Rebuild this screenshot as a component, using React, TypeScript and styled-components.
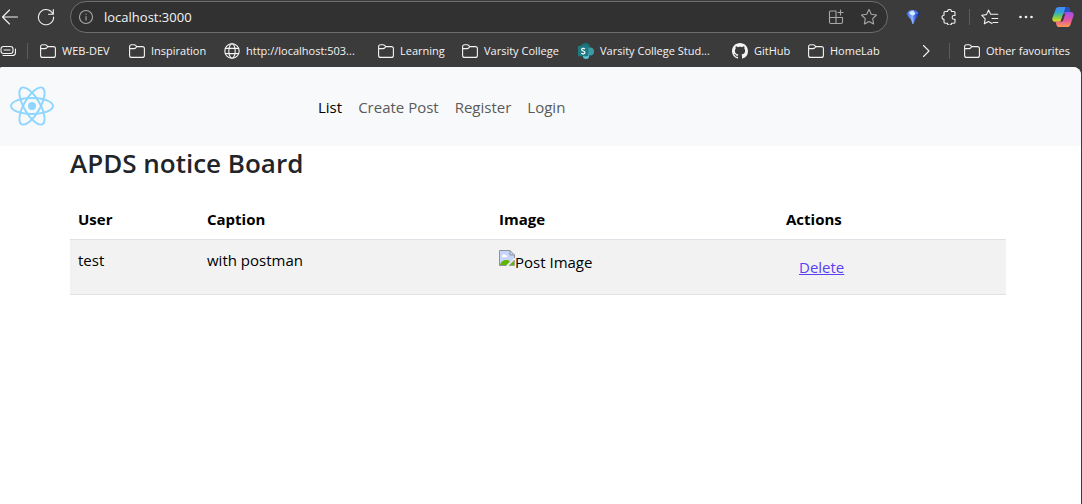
import React from "react";
import styled, { createGlobalStyle } from "styled-components";

const GlobalStyle = createGlobalStyle`
  *, *::before, *::after { box-sizing: border-box; }
  html, body { margin: 0; }
  body {
    background: #3b3b3b;
    color: #212529;
    font: 15px/24px "Open Sans", "Noto Sans", sans-serif;
  }
  svg { display: block; flex: none; }
  button { font: inherit; color: inherit; background: none; border: 0; padding: 0; cursor: pointer; }
`;

const Browser = styled.div`
  display: flex;
  flex-direction: column;
  min-height: 100vh;
`;

const Toolbar = styled.header`
  display: flex;
  align-items: center;
  height: 34px;
  color: #f2f2f2;
`;

const NavButtons = styled.div`
  display: flex;
  gap: 8px;
`;

const ToolButton = styled.button<{ $width: number }>`
  display: flex;
  align-items: center;
  justify-content: center;
  width: ${(p) => p.$width}px;
  height: 32px;
`;

const AddressBar = styled.div`
  display: flex;
  flex: 1;
  align-items: center;
  gap: 9px;
  height: 32px;
  margin: 0 7px 0 6px;
  padding: 0 9px 0 6px;
  border: 1px solid #6e6e6e;
  border-radius: 16px;
  background: #313131;
  color: #a8a8a8;
`;

const AddressInput = styled.input`
  flex: 1;
  min-width: 0;
  padding: 0;
  border: 0;
  outline: 0;
  background: none;
  color: #f4f4f4;
  font: 13px/20px "Open Sans", "Noto Sans", sans-serif;
`;

const AddressActions = styled.div`
  display: flex;
  gap: 16px;
`;

const Divider = styled.span<{ $gap: number }>`
  width: 1px;
  height: 16px;
  margin: 0 ${(p) => p.$gap}px;
  background: #5c5c5c;
`;

const Bookmarks = styled.nav`
  display: flex;
  align-items: center;
  height: 33px;
  padding-right: 12px;
  color: #f4f4f4;
  font-size: 11px;
  line-height: 16px;
  white-space: nowrap;
`;

const Bookmark = styled.a<{ $width?: number }>`
  display: flex;
  align-items: center;
  gap: 6px;
  width: ${(p) => (p.$width ? `${p.$width}px` : "auto")};
  color: inherit;
  text-decoration: none;
`;

const Spacer = styled.span`
  flex: 1;
`;

const Page = styled.div`
  flex: 1;
  margin-right: 1px;
  overflow: hidden;
  border-radius: 2px 8px 0 0;
  background: #fff;
`;

const Navbar = styled.nav`
  display: flex;
  align-items: center;
  height: 79px;
  padding: 0 10px 1px;
  background: #f8f9fa;
`;

const Brand = styled.a`
  width: 300px;
`;

const NavLinks = styled.ul`
  display: flex;
  margin: 0;
  padding: 0;
  list-style: none;
`;

const NavLink = styled.a<{ $active?: boolean }>`
  display: block;
  padding: 9px 8px 7px;
  color: ${(p) => (p.$active ? "#000" : "#595a5b")};
  text-decoration: none;
`;

const Container = styled.main`
  box-sizing: content-box;
  max-width: 936px;
  margin: 0 auto;
  padding: 0 17px 0 12px;
`;

const Title = styled.h3`
  margin: 0 0 18px;
  font-size: 26px;
  font-weight: 600;
  line-height: 35px;
`;

const Table = styled.table`
  width: 100%;
  table-layout: fixed;
  border-collapse: collapse;
  color: #000;
  text-align: left;
`;

const Col = styled.col<{ $width?: number }>`
  width: ${(p) => (p.$width ? `${p.$width}px` : "auto")};
`;

const Head = styled.th`
  padding: 8px;
  border-bottom: 1px solid #dee2e6;
  font-weight: 700;
`;

const Cell = styled.td`
  height: 55px;
  padding: 8px;
  border-bottom: 1px solid #dee2e6;
  background: #f2f2f2;
  vertical-align: top;
`;

const MissingImage = styled.span`
  display: flex;
  align-items: flex-start;
  padding-top: 2px;
`;

const DeleteButton = styled.button`
  padding: 7px 13px;
  color: #5a3ff5;
  text-decoration: underline;
`;

const Line = ({ size = 18, children }: { size?: number; children: React.ReactNode }) => (
  <svg width={size} height={size} viewBox={`0 0 ${size} ${size}`} fill="none" stroke="currentColor" strokeWidth="1.1" strokeLinecap="round" strokeLinejoin="round" aria-hidden="true">
    {children}
  </svg>
);

const STAR = "M9 1.5l2.3 4.8 5.2.7-3.8 3.6.9 5.3L9 13.4l-4.6 2.5.9-5.3L1.5 7l5.2-.7z";

const FolderIcon = () => (
  <Line size={16}>
    <path d="M.6 3.8c0-1.3.7-2 2-2h2.6c.6 0 1 .2 1.4.6l1.2 1.2h5.6c1.3 0 2 .7 2 2v6.8c0 1.3-.7 2-2 2H2.6c-1.3 0-2-.7-2-2zM.6 5.6h4.6c.6 0 1-.2 1.4-.6l1.2-1.4" />
  </Line>
);

const GlobeIcon = () => (
  <Line size={16}>
    <circle cx="8" cy="8" r="7.2" />
    <ellipse cx="8" cy="8" rx="3.2" ry="7.2" />
    <path d="M1.4 5.4h13.2M1.4 10.6h13.2" />
  </Line>
);

const SharePointIcon = () => (
  <svg width="16" height="16" viewBox="0 0 16 16" aria-hidden="true">
    <circle cx="7.5" cy="4.6" r="4.6" fill="#1b7078" />
    <circle cx="12" cy="8.6" r="4" fill="#3b9ca3" />
    <circle cx="8" cy="12.8" r="3.2" fill="#58c4d4" />
    <rect x="0" y="2.8" width="10.4" height="10.4" rx="1" fill="#207a82" />
    <path d="M6.9 5.900C5.700 5 3.500 5.300 3.600 6.700c.1 1.500 3.300 1 3.300 2.700 0 1.600-2.300 1.800-3.600.900" fill="none" stroke="#fff" strokeWidth="1.200" />
  </svg>
);

const GitHubIcon = () => (
  <svg width="16" height="16" viewBox="0 0 16 16" fill="currentColor" aria-hidden="true">
    <path d="M8 0C3.580 0 0 3.580 0 8c0 3.540 2.290 6.530 5.470 7.590.4.070.55-.17.55-.38 0-.19-.01-.82-.01-1.490-2.010.37-2.530-.49-2.690-.94-.09-.23-.48-.94-.82-1.130-.28-.15-.68-.52-.01-.53.63-.01 1.080.58 1.230.82.72 1.210 1.870.87 2.330.66.07-.52.28-.87.51-1.070-1.780-.2-3.640-.89-3.640-3.950 0-.87.31-1.590.82-2.150-.08-.2-.36-1.020.08-2.120 0 0 .67-.21 2.200.82.64-.18 1.320-.27 2-.27s1.360.09 2 .27c1.530-1.040 2.200-.82 2.200-.82.44 1.100.16 1.920.08 2.120.51.56.82 1.270.82 2.150 0 3.070-1.870 3.750-3.650 3.950.29.25.54.73.54 1.480 0 1.070-.01 1.930-.01 2.200 0 .21.15.46.55.38A8.010 8.010 0 0 0 16 8c0-4.420-3.580-8-8-8z" />
  </svg>
);

const GemIcon = () => (
  <svg width="14" height="16" viewBox="0 0 14 16" aria-hidden="true">
    <defs>
      <linearGradient id="gem" x1="0" x2="1">
        <stop offset="0" stopColor="#3a5be0" />
        <stop offset="0.45" stopColor="#8fb6ff" />
        <stop offset="0.65" stopColor="#3e67ec" />
        <stop offset="1" stopColor="#16247c" />
      </linearGradient>
    </defs>
    <path d="M.5 4.500C1.500 2 4 1 7 1s5.500 1 6.500 3.500c.2 1.500-3 4-4.400 6.500L7.500 15h-1l-1.400-4C3.800 8.500.3 6 .5 4.500z" fill="url(#gem)" />
    <path d="M3.500 3.200C4.500 2.200 6 2 8 2.200L9.500 5 7 6.500 3.500 5z" fill="#d6eeff" />
    <path d="M8.500 2c2 .2 3.300 1 3.900 2.600L9.800 5.200z" fill="#4b82f4" />
  </svg>
);

const CopilotIcon = () => (
  <svg width="22" height="22" viewBox="0 0 22 22" aria-hidden="true">
    <defs>
      <linearGradient id="cpLeft" x1="0" y1="0" x2="0" y2="1">
        <stop offset="0" stopColor="#4f86f7" />
        <stop offset="0.35" stopColor="#2aa9d8" />
        <stop offset="0.65" stopColor="#6fcb58" />
        <stop offset="1" stopColor="#f5d821" />
      </linearGradient>
      <linearGradient id="cpRight" x1="0" y1="0" x2="0" y2="1">
        <stop offset="0" stopColor="#9a4ff0" />
        <stop offset="0.5" stopColor="#e052a8" />
        <stop offset="1" stopColor="#ff9a52" />
      </linearGradient>
    </defs>
    <path d="M7 1h8c1.500 0 2.300 1 2.700 2.300L18.200 6H14c-1.500 0-2.300.7-2.800 2.200L9.600 13.500c-.5 1.600-1.400 2.300-3 2.300H3C.8 15.800 0 14 .4 12L3.600 3.400C4.200 1.800 5.300 1 7 1z" fill="url(#cpLeft)" />
    <path d="M13.500 1H15c1.500 0 2.300 1 2.700 2.300l.5 2.700H14c-1.200 0-2 .5-2.500 1.500z" fill="#2350c4" />
    <path d="M15 21H7.200c-1.500 0-2.400-.9-2.800-2.300l-.8-2.900h3c1.600 0 2.500-.7 3-2.300l1.600-5.300C11.700 6.700 12.500 6 14 6h4.800c2.400 0 3.200 1.600 2.700 3.800l-3 8.600c-.6 1.800-1.800 2.600-3.500 2.600z" fill="url(#cpRight)" />
    <path d="M11 8.500l2.500-1.500-2.500 8-2.500 1z" fill="#3b3b3b" />
  </svg>
);

const ReactLogo = () => (
  <svg width="44" height="40" viewBox="-22 -20 44 40" fill="none" stroke="#8ed6ff" strokeWidth="1.900" aria-hidden="true">
    <circle r="4" fill="#8ed6ff" stroke="none" />
    <ellipse rx="21" ry="8" />
    <ellipse rx="21" ry="8" transform="rotate(60)" />
    <ellipse rx="21" ry="8" transform="rotate(120)" />
  </svg>
);

const BrokenImageIcon = () => (
  <svg width="16" height="16" viewBox="0 0 16 16" aria-hidden="true">
    <path d="M.5.5h10.500l4.500 4.500v3L7.500 15.500h-7z" fill="#c6d5fb" />
    <path d="M3 6.500c0-2 2.500-3 3.500-1.200 1.500-.3 2.200 1.200 1.200 2H3z" fill="#fff" />
    <path d="M1 15c.5-4 6-7 10-3.500L7.500 15z" fill="#62b600" />
    <path d="M7.500 15.500h-7V.5h10.500l4.500 4.500v3M11 .5V5h4.500" fill="none" stroke="#8f9399" />
    <path d="M15.500 10v5.500H10z" fill="#62b600" stroke="#8f9399" strokeWidth=".6" />
  </svg>
);

const bookmarks = [
  { label: "WEB-DEV", icon: <FolderIcon />, width: 89 },
  { label: "Inspiration", icon: <FolderIcon />, width: 95 },
  { label: "http://localhost:503...", icon: <GlobeIcon />, width: 154 },
  { label: "Learning", icon: <FolderIcon />, width: 84 },
  { label: "Varsity College", icon: <FolderIcon />, width: 116 },
  { label: "Varsity College Stud...", icon: <SharePointIcon />, width: 154 },
  { label: "GitHub", icon: <GitHubIcon />, width: 76 },
  { label: "HomeLab", icon: <FolderIcon />, width: 74 },
];

const posts = [{ user: "test", caption: "with postman", alt: "Post Image" }];

export default function App() {
  return (
    <Browser>
      <GlobalStyle />
      <Toolbar>
        <NavButtons>
          <ToolButton $width={20} aria-label="Back">
            <Line><path d="M16.500 9H1.500M8.500 2L1.500 9l7 7" /></Line>
          </ToolButton>
          <ToolButton $width={36} aria-label="Refresh">
            <Line><path d="M16 6.200A7.600 7.600 0 1 0 16.600 9M16.300 1.500v4.800h-4.800" /></Line>
          </ToolButton>
        </NavButtons>
        <AddressBar>
          <ToolButton $width={18} aria-label="Site information">
            <Line size={16}><circle cx="8" cy="8" r="6.500" /><path d="M8 7.500v3.500M8 5v.2" /></Line>
          </ToolButton>
          <AddressInput aria-label="Address" defaultValue="localhost:3000" />
          <AddressActions>
            <ToolButton $width={16} aria-label="Install app">
              <Line size={16}><path d="M8 2H2.500C1.800 2 1.500 2.300 1.500 3v10c0 .8.400 1.500 1.500 1.500h10c.8 0 1.500-.5 1.500-1.500V8.500h-13M8 2v12.500M12.500 1v5M10 3.500h5" /></Line>
            </ToolButton>
            <ToolButton $width={18} aria-label="Add to favourites">
              <Line><path d={STAR} /></Line>
            </ToolButton>
          </AddressActions>
        </AddressBar>
        <ToolButton $width={36} aria-label="Gem extension"><GemIcon /></ToolButton>
        <ToolButton $width={36} aria-label="Extensions">
          <Line size={16}><path d="M4 2.500h2.500a2 2 0 0 1 4 0h2.500c.8 0 1 .4 1 1V6.500h-1a1.900 1.900 0 0 0 0 3.800h1v2.700c0 .8-.4 1.200-1 1.200h-2.500a2 2 0 0 1-4 0H4.200c-.8 0-1.200-.4-1.200-1.200v-2.700a2 2 0 0 1 0-4V3.500c0-.6.400-1 1-1z" /></Line>
        </ToolButton>
        <Divider $gap={2} />
        <ToolButton $width={36} aria-label="Favourites">
          <Line><path d="M11 15.500l-3.500-2-4.200 2.300.9-5L.8 7.300l4.700-.7 2-4.500 2.100 4.200h7.200M11 10.500h5.800M12 14.500h4.800" /></Line>
        </ToolButton>
        <ToolButton $width={36} aria-label="Settings and more">
          <svg width="16" height="16" viewBox="0 0 16 16" fill="currentColor" aria-hidden="true"><circle cx="2.500" cy="8" r="1.300" /><circle cx="8" cy="8" r="1.300" /><circle cx="13.500" cy="8" r="1.300" /></svg>
        </ToolButton>
        <ToolButton $width={38} aria-label="Copilot"><CopilotIcon /></ToolButton>
      </Toolbar>

      <Bookmarks aria-label="Favourites bar">
        <ToolButton $width={15} aria-label="Workspaces">
          <Line size={16}><rect x="1" y="3.500" width="12" height="7" rx="2.500" /><path d="M4 7h6M3 12.500h9.500c2 0 3-1.500 3-3.500V6" /></Line>
        </ToolButton>
        <Divider $gap={12} />
        {bookmarks.map((b) => (
          <Bookmark key={b.label} href="#" $width={b.width}>{b.icon}{b.label}</Bookmark>
        ))}
        <Spacer />
        <ToolButton $width={18} aria-label="More favourites">
          <Line size={16}><path d="M5.500 2.500L11 8l-5.500 5.500" /></Line>
        </ToolButton>
        <Divider $gap={14} />
        <Bookmark href="#"><FolderIcon />Other favourites</Bookmark>
      </Bookmarks>

      <Page>
        <Navbar>
          <Brand href="#" aria-label="Home"><ReactLogo /></Brand>
          <NavLinks>
            <li><NavLink href="#" $active>List</NavLink></li>
            <li><NavLink href="#">Create Post</NavLink></li>
            <li><NavLink href="#">Register</NavLink></li>
            <li><NavLink href="#">Login</NavLink></li>
          </NavLinks>
        </Navbar>
        <Container>
          <Title>APDS notice Board</Title>
          <Table>
            <colgroup>
              <Col $width={129} /><Col $width={292} /><Col $width={287} /><Col />
            </colgroup>
            <thead>
              <tr><Head>User</Head><Head>Caption</Head><Head>Image</Head><Head>Actions</Head></tr>
            </thead>
            <tbody>
              {posts.map((post) => (
                <tr key={post.user}>
                  <Cell>{post.user}</Cell>
                  <Cell>{post.caption}</Cell>
                  <Cell><MissingImage><BrokenImageIcon />{post.alt}</MissingImage></Cell>
                  <Cell><DeleteButton>Delete</DeleteButton></Cell>
                </tr>
              ))}
            </tbody>
          </Table>
        </Container>
      </Page>
    </Browser>
  );
}
